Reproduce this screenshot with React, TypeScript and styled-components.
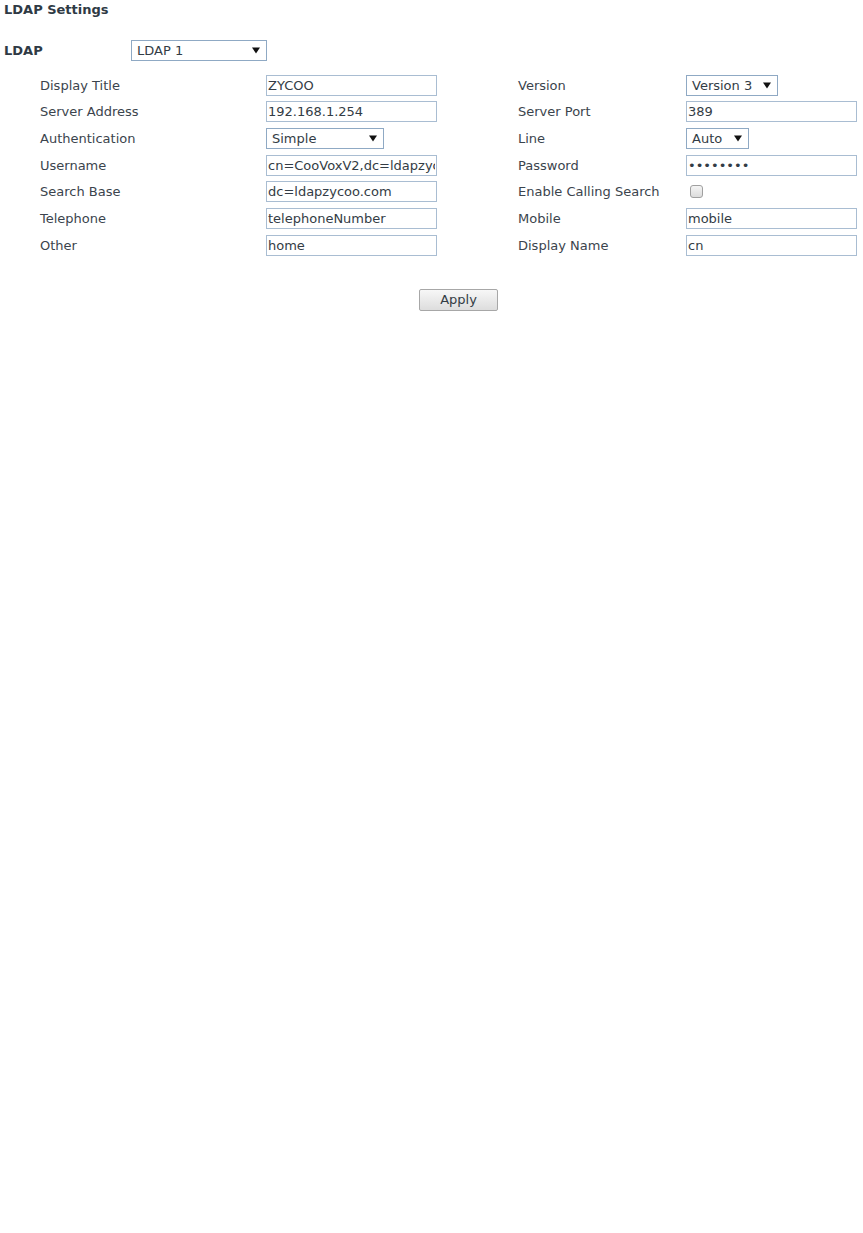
import styled, { createGlobalStyle } from 'styled-components'
import { FC } from 'react'

const GlobalStyle = createGlobalStyle`
	body {
		margin: 0;
		background: #ffffff;
		font-family: 'DejaVu Sans', Tahoma, sans-serif;
		font-size: 13px;
		color: #333c45;
	}
`

const Page = styled.div`
	padding: 0 4px;
	width: 855px;
`

const Heading = styled.h2`
	margin: 0;
	font-size: 13px;
	line-height: 20px;
	font-weight: bold;
	color: #2f3a45;
`

const TopRow = styled.div`
	display: flex;
	align-items: center;
	margin-top: 20px;
	height: 21px;
`

const TopLabel = styled.div`
	width: 127px;
	font-weight: bold;
	color: #2f3a45;
`

const FieldGrid = styled.div`
	display: grid;
	grid-template-columns: 226px 252px 168px 171px;
	grid-auto-rows: 26.67px;
	align-items: center;
	margin: 11px 0 0 36px;
`

const Label = styled.div`
	color: #3b444d;
	white-space: nowrap;
`

const TextBox = styled.input`
	box-sizing: border-box;
	width: 171px;
	height: 21px;
	margin: 0;
	padding: 0 1px;
	border: 1px solid #a9bdd2;
	font-family: inherit;
	font-size: 13px;
	color: #333c45;
	background: #fff;
	outline: none;
`

const SelectBox = styled.div<{ w: number }>`
	box-sizing: border-box;
	width: ${({ w }) => w}px;
	height: 21px;
	display: flex;
	align-items: center;
	justify-content: space-between;
	padding: 0 6px 0 5px;
	border: 1px solid #8fa9c4;
	background: #fff;
	color: #333c45;
	svg {
		flex: none;
	}
`

const Check = styled.span`
	display: block;
	box-sizing: border-box;
	width: 13px;
	height: 13px;
	margin-left: 4px;
	border: 1px solid #a0a0a0;
	border-radius: 3px;
	background: linear-gradient(#f4f4f4, #dcdcdc);
`

const ButtonRow = styled.div`
	display: flex;
	margin: 30px 0 0 415px;
`

const Button = styled.button`
	width: 79px;
	height: 22px;
	padding: 0;
	border: 1px solid #a7a7a7;
	border-radius: 2px;
	background: linear-gradient(#f7f7f7, #dddddd);
	font-family: inherit;
	font-size: 13px;
	color: #333c45;
`

const Arrow = () => (
	<svg width='8' height='7' viewBox='0 0 8 7'>
		<path d='M0 0.5 H8 L4 6.5 Z' fill='#111' />
	</svg>
)

const Select: FC<{ value: string; w: number }> = ({ value, w }) => (
	<SelectBox w={w}>
		<span>{value}</span>
		<Arrow />
	</SelectBox>
)

const App = () => (
	<>
		<GlobalStyle />
		<Page>
			<Heading>LDAP Settings</Heading>
			<TopRow>
				<TopLabel>LDAP</TopLabel>
				<Select value='LDAP 1' w={136} />
			</TopRow>
			<FieldGrid>
				<Label>Display Title</Label>
				<TextBox defaultValue='ZYCOO' />
				<Label>Version</Label>
				<Select value='Version 3' w={92} />

				<Label>Server Address</Label>
				<TextBox defaultValue='192.168.1.254' />
				<Label>Server Port</Label>
				<TextBox defaultValue='389' />

				<Label>Authentication</Label>
				<Select value='Simple' w={118} />
				<Label>Line</Label>
				<Select value='Auto' w={63} />

				<Label>Username</Label>
				<TextBox defaultValue='cn=CooVoxV2,dc=ldapzycoo,dc=com' />
				<Label>Password</Label>
				<TextBox type='password' defaultValue='password' />

				<Label>Search Base</Label>
				<TextBox defaultValue='dc=ldapzycoo.com' />
				<Label>Enable Calling Search</Label>
				<Check />

				<Label>Telephone</Label>
				<TextBox defaultValue='telephoneNumber' />
				<Label>Mobile</Label>
				<TextBox defaultValue='mobile' />

				<Label>Other</Label>
				<TextBox defaultValue='home' />
				<Label>Display Name</Label>
				<TextBox defaultValue='cn' />
			</FieldGrid>
			<ButtonRow>
				<Button>Apply</Button>
			</ButtonRow>
		</Page>
	</>
)

export default App
